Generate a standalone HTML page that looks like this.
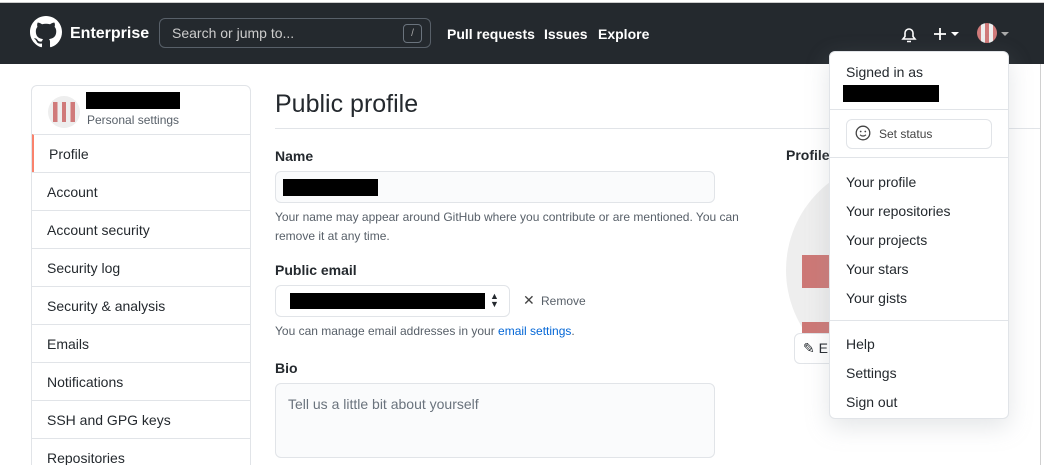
<!DOCTYPE html><html><head><style>
*{box-sizing:border-box;margin:0;padding:0}
html,body{width:1044px;height:465px;overflow:hidden}
body{background:#fff;font-family:"Liberation Sans",sans-serif;color:#24292e;position:relative;font-size:14px}
.hdr{position:absolute;left:0;top:2px;width:1044px;height:62px;background:#24292e;border-top:1px solid #ccc}
.a{position:absolute;white-space:nowrap}
.w{color:#fff;font-weight:bold;font-size:14px}
.side{position:absolute;left:31px;top:85px;width:220px;height:400px;border:1px solid #e1e4e8;border-radius:6px}
.item{position:absolute;left:0;width:218px;height:38px;border-top:1px solid #e1e4e8;padding:11px 15px;font-size:14px}
.blk{position:absolute;background:#000}
.inp{position:absolute;border:1px solid #e1e4e8;border-radius:6px;background:#fafbfc}
.note{font-size:12px;color:#586069}
.menu{position:absolute;left:829px;top:51px;width:180px;height:368px;background:#fff;border:1px solid #e1e4e8;border-radius:6px;box-shadow:0 8px 24px rgba(149,157,165,.25)}
.mi{position:absolute;left:16px;font-size:14px;color:#24292e}
.chk{background:
 linear-gradient(90deg,transparent 0 20%,#eee 20% 40%,transparent 40% 60%,#eee 60% 80%,transparent 80%),
 linear-gradient(#d07a7a,#d07a7a)}
</style></head><body>
<div class="hdr"></div>
<svg class="a" style="left:30px;top:16px" width="32" height="32" viewBox="0 0 16 16"><path fill="#fff" d="M8 0C3.58 0 0 3.58 0 8c0 3.540 2.290 6.530 5.470 7.590.4.07.55-.17.55-.38 0-.19-.01-.82-.01-1.490-2.010.37-2.530-.49-2.690-.94-.09-.23-.48-.94-.82-1.130-.28-.15-.68-.52-.01-.53.63-.01 1.080.58 1.230.82.72 1.210 1.870.87 2.330.66.07-.52.28-.87.51-1.070-1.780-.2-3.640-.89-3.640-3.950 0-.87.31-1.590.82-2.150-.08-.2-.36-1.020.08-2.120 0 0 .67-.21 2.200.82.64-.18 1.320-.27 2-.27.68 0 1.360.09 2 .27 1.530-1.040 2.200-.82 2.200-.82.44 1.100.16 1.920.08 2.120.51.56.82 1.270.82 2.150 0 3.070-1.870 3.750-3.650 3.950.29.25.54.73.54 1.480 0 1.070-.01 1.930-.01 2.200 0 .21.15.46.55.38A8.013 8.013 0 0016 8c0-4.420-3.580-8-8-8z"/></svg>
<div class="a w" style="left:70px;top:25px;font-size:16px">Enterprise</div>
<div class="a" style="left:159px;top:18px;width:272px;height:30px;border:1px solid #586069;border-radius:6px"></div>
<div class="a" style="left:172px;top:25px;color:#ccc;font-size:14px">Search or jump to...</div>
<div class="a" style="left:403px;top:24px;width:19px;height:19px;border:1px solid #6a737d;border-radius:4px;color:#aaa;font-size:10px;text-align:center;line-height:17px">/</div>
<div class="a w" style="left:447px;top:26px">Pull requests</div>
<div class="a w" style="left:544px;top:26px">Issues</div>
<div class="a w" style="left:598px;top:26px">Explore</div>
<svg class="a" style="left:900px;top:25px" width="18" height="19" viewBox="0 0 18 19"><path fill="none" stroke="#fff" stroke-width="1.6" d="M3 14h12l-2-2.5V8a4 4 0 00-8 0v3.5zM7 16.5h4"/></svg>
<svg class="a" style="left:933px;top:27px" width="14" height="14" viewBox="0 0 14 14"><path d="M7 1v12M1 7h12" stroke="#fff" stroke-width="1.8"/></svg>
<div class="a" style="left:951px;top:32px;border:4px solid transparent;border-top-color:#fff"></div>
<div class="a chk" style="left:977px;top:23px;width:20px;height:20px;border-radius:50%"></div>
<div class="a" style="left:1001px;top:32px;border:4px solid transparent;border-top-color:#aaa"></div>
<div class="a" style="left:1040px;top:64px;width:1px;height:401px;background:#d0d0d0"></div>

<div class="side">
<div class="a" style="left:16px;top:10px;width:32px;height:32px;border-radius:50%;background:#eee;overflow:hidden"><div class="chk" style="margin:6px 5px;height:20px;width:22px"></div></div>
<div class="blk" style="left:54px;top:6px;width:94px;height:17px"></div>
<div class="a note" style="left:55px;top:27px">Personal settings</div>
<div class="item" style="top:48px;border-left:2px solid #f9826c">Profile</div>
<div class="item" style="top:86px">Account</div>
<div class="item" style="top:124px">Account security</div>
<div class="item" style="top:162px">Security log</div>
<div class="item" style="top:200px">Security &amp; analysis</div>
<div class="item" style="top:238px">Emails</div>
<div class="item" style="top:276px">Notifications</div>
<div class="item" style="top:314px">SSH and GPG keys</div>
<div class="item" style="top:352px">Repositories</div>
</div>

<div class="a" style="left:275px;top:90px;font-size:25px">Public profile</div>
<div class="a" style="left:275px;top:128px;width:765px;height:1px;background:#e1e4e8"></div>
<div class="a" style="left:275px;top:148px;font-weight:bold">Name</div>
<div class="inp" style="left:275px;top:171px;width:440px;height:32px"></div>
<div class="blk" style="left:283px;top:179px;width:95px;height:17px"></div>
<div class="a note" style="left:275px;top:210px">Your name may appear around GitHub where you contribute or are mentioned. You can</div>
<div class="a note" style="left:275px;top:229px">remove it at any time.</div>
<div class="a" style="left:275px;top:262px;font-weight:bold">Public email</div>
<div class="inp" style="left:275px;top:285px;width:235px;height:32px;background:#fff"></div>
<div class="blk" style="left:290px;top:293px;width:195px;height:16px"></div>
<div class="a" style="left:490px;top:292px;font-size:9px;line-height:8px">▲<br>▼</div>
<div class="a" style="left:523px;top:292px;font-size:14px;color:#444">✕</div>
<div class="a note" style="left:541px;top:294px">Remove</div>
<div class="a note" style="left:275px;top:324px">You can manage email addresses in your <span style="color:#0366d6">email settings</span>.</div>
<div class="a" style="left:275px;top:360px;font-weight:bold">Bio</div>
<div class="inp" style="left:275px;top:383px;width:440px;height:75px"></div>
<div class="a" style="left:288px;top:396px;color:#6a737d">Tell us a little bit about yourself</div>

<div class="a" style="left:786px;top:147px;font-weight:bold">Profile</div>
<div class="a" style="left:786px;top:160px;width:220px;height:220px;border-radius:50%;background:#eee"></div>
<div class="a" style="left:802px;top:255px;width:30px;height:33px;background:#cd7876"></div>
<div class="a" style="left:802px;top:322px;width:30px;height:12px;background:#cd7876"></div>
<div class="a" style="left:794px;top:333px;width:50px;height:31px;border:1px solid #e1e4e8;border-radius:6px;background:#fff"></div>
<div class="a" style="left:803px;top:340px;font-size:14px">✎ E</div>

<div class="menu">
<div class="mi" style="top:12px">Signed in as</div>
<div class="blk" style="left:13px;top:33px;width:96px;height:17px"></div>
<div class="a" style="left:0;top:57px;width:178px;height:1px;background:#e1e4e8"></div>
<div class="a" style="left:16px;top:67px;width:146px;height:30px;border:1px solid #e1e4e8;border-radius:6px"></div>
<svg class="a" style="left:25px;top:73px" width="16" height="16" viewBox="0 0 16 16"><circle cx="8" cy="8" r="6.8" fill="none" stroke="#444" stroke-width="1.3"/><circle cx="5.7" cy="6.5" r=".9" fill="#444"/><circle cx="10.3" cy="6.5" r=".9" fill="#444"/><path d="M5 9.8q3 2.5 6 0" fill="none" stroke="#444" stroke-width="1.2"/></svg>
<div class="a" style="left:49px;top:75px;font-size:12px;color:#444">Set status</div>
<div class="a" style="left:0;top:105px;width:178px;height:1px;background:#e1e4e8"></div>
<div class="mi" style="top:122px">Your profile</div>
<div class="mi" style="top:151px">Your repositories</div>
<div class="mi" style="top:180px">Your projects</div>
<div class="mi" style="top:209px">Your stars</div>
<div class="mi" style="top:238px">Your gists</div>
<div class="a" style="left:0;top:268px;width:178px;height:1px;background:#e1e4e8"></div>
<div class="mi" style="top:284px">Help</div>
<div class="mi" style="top:313px">Settings</div>
<div class="mi" style="top:342px">Sign out</div>
</div>
</body></html>
